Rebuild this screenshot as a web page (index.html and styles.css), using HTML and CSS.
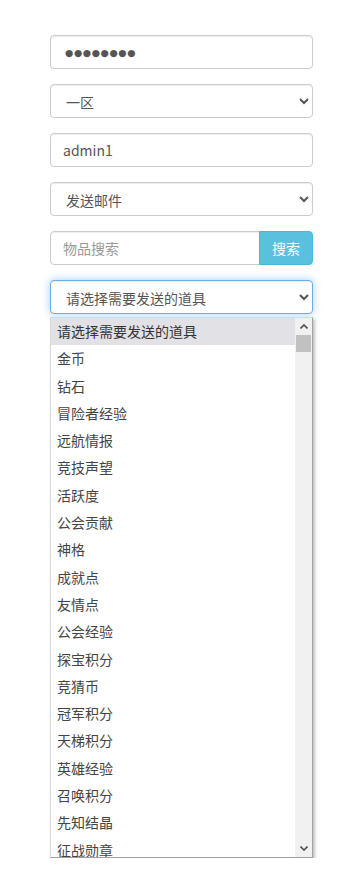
FILE: index.html
```html
<!DOCTYPE html>
<html lang="zh-CN">
<head>
<meta charset="UTF-8">
<title>邮件发送</title>
<link rel="stylesheet" href="styles.css">
</head>
<body>
<div class="panel">
    <input type="text" class="form-control pwd" value="●●●●●●●●">
    <select class="form-control">
        <option>一区</option>
    </select>
    <input type="text" class="form-control" value="admin1">
    <select class="form-control">
        <option>发送邮件</option>
    </select>
    <div class="input-group">
        <input type="text" class="form-control" placeholder="物品搜索">
        <button class="btn-info">搜索</button>
    </div>
    <div class="item-select">
        <select class="form-control focus">
            <option>请选择需要发送的道具</option>
        </select>
        <div class="item-list">
            <div class="options">
                <div class="opt selected">请选择需要发送的道具</div>
                <div class="opt">金币</div>
                <div class="opt">钻石</div>
                <div class="opt">冒险者经验</div>
                <div class="opt">远航情报</div>
                <div class="opt">竞技声望</div>
                <div class="opt">活跃度</div>
                <div class="opt">公会贡献</div>
                <div class="opt">神格</div>
                <div class="opt">成就点</div>
                <div class="opt">友情点</div>
                <div class="opt">公会经验</div>
                <div class="opt">探宝积分</div>
                <div class="opt">竞猜币</div>
                <div class="opt">冠军积分</div>
                <div class="opt">天梯积分</div>
                <div class="opt">英雄经验</div>
                <div class="opt">召唤积分</div>
                <div class="opt">先知结晶</div>
                <div class="opt">征战勋章</div>
            </div>
            <div class="scrollbar">
                <div class="arrow"><svg width="8" height="5" viewBox="0 0 8 5"><path d="M0.5 4.5 L4 1 L7.5 4.5" fill="none" stroke="#505050" stroke-width="1.6"/></svg></div>
                <div class="track"><div class="thumb"></div></div>
                <div class="arrow"><svg width="8" height="5" viewBox="0 0 8 5"><path d="M0.5 0.5 L4 4 L7.5 0.5" fill="none" stroke="#505050" stroke-width="1.6"/></svg></div>
            </div>
        </div>
    </div>
</div>
</body>
</html>
```

FILE: styles.css
```css
body, html {
    margin: 0;
    background-color: #fff;
    font-family: "Noto Sans CJK SC", "Liberation Sans", sans-serif;
    font-size: 14px;
    color: #333;
}
.panel {
    width: 263px;
    padding: 35px 0 0 50px;
    display: flex;
    flex-direction: column;
    gap: 15px;
}
.form-control {
    display: block;
    box-sizing: border-box;
    width: 100%;
    height: 34px;
    margin: 0;
    padding: 6px 12px;
    font-family: "Noto Sans CJK SC", "Liberation Sans", sans-serif;
    font-size: 14px;
    color: #555;
    background-color: #fff;
    border: 1px solid #ccc;
    border-radius: 4px;
    box-shadow: inset 0 1px 1px rgba(0,0,0,.075);
    outline: none;
}
.form-control.pwd {
    padding-left: 14px;
    font-family: "DejaVu Sans", sans-serif;
    font-size: 9.5px;
    letter-spacing: 0.6px;
    color: #555;
}
select.form-control {
    padding: 6px 11px;
}
.form-control::placeholder {
    color: #999;
}
.form-control.focus {
    border-color: #66afe9;
    box-shadow: inset 0 1px 1px rgba(0,0,0,.075), 0 0 8px rgba(102,175,233,.6);
}
.input-group {
    display: flex;
}
.input-group .form-control {
    flex: 1;
    border-radius: 4px 0 0 4px;
}
.btn-info {
    width: 54px;
    height: 34px;
    margin-left: -1px;
    font-family: "Noto Sans CJK SC", "Liberation Sans", sans-serif;
    font-size: 14px;
    color: #fff;
    background-color: #5bc0de;
    border: 1px solid #46b8da;
    border-radius: 0 4px 4px 0;
}
.item-list {
    margin-top: 3px;
    width: 263px;
    height: 541px;
    box-sizing: border-box;
    border: 1px solid #d8d8d8;
    border-right-color: #a0a0a0;
    border-bottom-color: #a0a0a0;
    background: #fff;
    box-shadow: 2px 2px 3px rgba(0,0,0,0.25);
    display: flex;
    overflow: hidden;
}
.options {
    flex: 1;
}
.opt {
    height: 27.3px;
    line-height: 27.3px;
    padding-left: 6px;
    color: #444;
    white-space: nowrap;
}
.opt.selected {
    background-color: #e1e1e6;
    color: #333;
}
.scrollbar {
    width: 17px;
    display: flex;
    flex-direction: column;
    background: #f1f1f1;
}
.arrow {
    height: 17px;
    display: flex;
    align-items: center;
    justify-content: center;
}
.track {
    flex: 1;
}
.thumb {
    height: 17px;
    margin: 0 1px;
    background: #c1c1c1;
}
```
